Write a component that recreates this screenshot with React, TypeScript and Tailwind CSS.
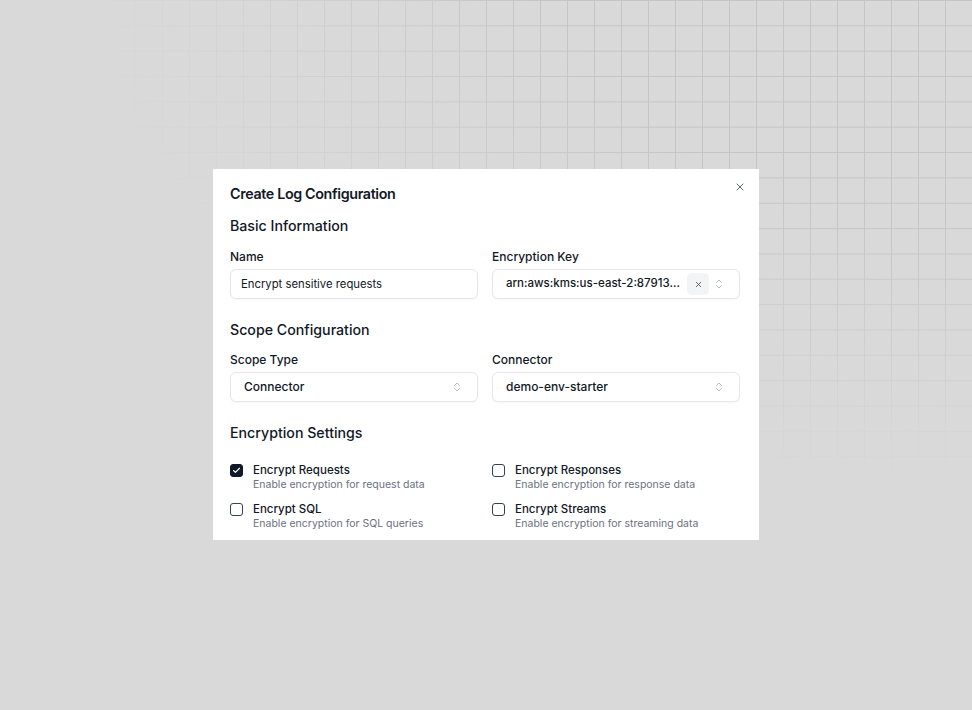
import React from "react";
import { X, ChevronsUpDown, Check } from "lucide-react";

function Field({ label, children }: { label: string; children: React.ReactNode }) {
  return (
    <div className="flex flex-col gap-[4px]">
      <div className="text-[12px] leading-[16px] font-medium text-[#111827]">{label}</div>
      {children}
    </div>
  );
}

function SelectBox({ value }: { value: string }) {
  return (
    <div className="h-[30px] rounded-[6px] border border-[#e5e7eb] bg-white flex items-center pl-[13px] pr-[14px] shadow-[0_1px_2px_rgba(0,0,0,0.04)]">
      <span className="flex-1 text-[12px] font-medium text-[#111827] whitespace-nowrap">{value}</span>
      <ChevronsUpDown size={12} strokeWidth={1.5} className="text-[#9ca3af]" />
    </div>
  );
}

function CheckItem({ checked, title, desc }: { checked?: boolean; title: string; desc: string }) {
  return (
    <div className="flex gap-[10px]">
      <div
        className={
          "mt-[2px] w-[13px] h-[13px] rounded-[3px] flex items-center justify-center shrink-0 " +
          (checked ? "bg-[#111827] border border-[#111827]" : "border border-[#374151] bg-white")
        }
      >
        {checked && <Check size={9} strokeWidth={3} className="text-white" />}
      </div>
      <div className="flex flex-col">
        <div className="text-[11.5px] leading-[16px] font-medium text-[#111827]">{title}</div>
        <div className="text-[10.5px] leading-[14px] text-[#6b7280]">{desc}</div>
      </div>
    </div>
  );
}

export default function App() {
  return (
    <div
      className="relative w-full h-[710px] overflow-hidden bg-[#d9d9d9] flex justify-center pt-[169px]"
      style={{ fontFamily: "Inter, 'Noto Sans', sans-serif" }}
    >
      <div className="absolute inset-0 bg-[linear-gradient(to_right,#c4c4c4_1px,transparent_1px),linear-gradient(to_bottom,#c4c4c4_1px,transparent_1px)] bg-[size:27px_25.357px] [mask-image:radial-gradient(ellipse_880px_480px_at_100%_0%,black_45%,transparent_100%)]" />
      <div className="relative w-[546px] h-[371px] bg-white pl-[17px] pr-[19px] pt-[15px] pb-[11px] flex flex-col">
        <button className="absolute right-[13px] top-[12px] text-[#374151]">
          <X size={12} strokeWidth={1.6} />
        </button>
        <h2 className="text-[14.3px] leading-[20px] font-semibold tracking-tight text-[#111827]">
          Create Log Configuration
        </h2>
        <h3 className="mt-[10px] text-[14.2px] leading-[24px] font-medium text-[#111827]">Basic Information</h3>
        <div className="mt-[11px] grid grid-cols-2 gap-x-[14px]">
          <Field label="Name">
            <div className="h-[30px] rounded-[6px] border border-[#e5e7eb] bg-white flex items-center px-[10px] shadow-[0_1px_2px_rgba(0,0,0,0.04)]">
              <span className="text-[11.3px] text-[#111827] whitespace-nowrap">Encrypt sensitive requests</span>
            </div>
          </Field>
          <Field label="Encryption Key">
            <div className="h-[30px] rounded-[6px] border border-[#e5e7eb] bg-white flex items-center pl-[13px] pr-[14px] shadow-[0_1px_2px_rgba(0,0,0,0.04)]">
              <span className="flex-1 text-[11.5px] font-medium text-[#111827] whitespace-nowrap">arn:aws:kms:us-east-2:87913...</span>
              <span className="w-[22px] h-[22px] rounded-[5px] bg-[#f3f4f6] flex items-center justify-center mr-[4px]">
                <X size={9} strokeWidth={2} className="text-[#374151]" />
              </span>
              <ChevronsUpDown size={12} strokeWidth={1.5} className="text-[#9ca3af]" />
            </div>
          </Field>
        </div>
        <h3 className="mt-[19px] text-[14.2px] leading-[24px] font-medium text-[#111827]">Scope Configuration</h3>
        <div className="mt-[10px] grid grid-cols-2 gap-x-[14px]">
          <Field label="Scope Type">
            <SelectBox value="Connector" />
          </Field>
          <Field label="Connector">
            <SelectBox value="demo-env-starter" />
          </Field>
        </div>
        <h3 className="mt-[19px] text-[14.2px] leading-[24px] font-medium text-[#111827]">Encryption Settings</h3>
        <div className="mt-[17px] grid grid-cols-2 gap-x-[14px] gap-y-[9px]">
          <CheckItem checked title="Encrypt Requests" desc="Enable encryption for request data" />
          <CheckItem title="Encrypt Responses" desc="Enable encryption for response data" />
          <CheckItem title="Encrypt SQL" desc="Enable encryption for SQL queries" />
          <CheckItem title="Encrypt Streams" desc="Enable encryption for streaming data" />
        </div>
      </div>
    </div>
  );
}
